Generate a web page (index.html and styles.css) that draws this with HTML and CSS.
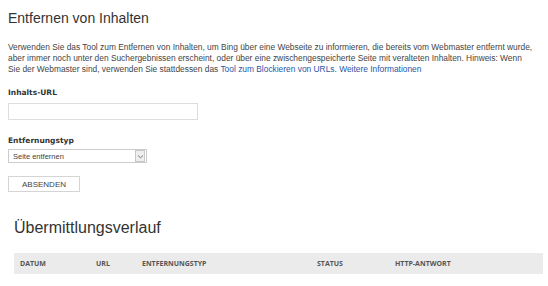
FILE: index.html
```html
<!DOCTYPE html>
<html lang="de">
<head>
    <meta charset="UTF-8">
    <title>Entfernen von Inhalten</title>
    <link rel="stylesheet" href="styles.css">
</head>
<body>
    <div class="page">
        <h1 class="page-title">Entfernen von Inhalten</h1>
        <p class="intro">Verwenden Sie das Tool zum Entfernen von Inhalten, um Bing über eine Webseite zu informieren, die bereits vom Webmaster entfernt wurde, aber immer noch unter den Suchergebnissen erscheint, oder über eine zwischengespeicherte Seite mit veralteten Inhalten. Hinweis: Wenn Sie der Webmaster sind, verwenden Sie stattdessen das <a href="#">Tool zum Blockieren von URLs</a>. <a href="#">Weitere Informationen</a></p>

        <form class="removal-form">
            <label class="field-label" for="content-url">Inhalts-URL</label>
            <input class="text-input" id="content-url" type="text">

            <label class="field-label" for="removal-type">Entfernungstyp</label>
            <div class="select-box">
                <span class="select-value">Seite entfernen</span>
                <span class="select-arrow">
                    <svg width="7" height="5" viewBox="0 0 7 5"><path d="M1 1.5 L3.5 3.8 L6 1.5" fill="none" stroke="#777" stroke-width="1"/></svg>
                </span>
            </div>

            <button class="submit-btn" type="button">ABSENDEN</button>
        </form>
    </div>

    <section class="history">
        <h2 class="history-title">Übermittlungsverlauf</h2>
        <div class="history-head">
            <span class="col col-date">DATUM</span>
            <span class="col col-url">URL</span>
            <span class="col col-type">ENTFERNUNGSTYP</span>
            <span class="col col-status">STATUS</span>
            <span class="col col-http">HTTP-ANTWORT</span>
        </div>
    </section>
</body>
</html>
```

FILE: styles.css
```css
/* --- Base --- */
* {
    margin: 0;
    padding: 0;
    box-sizing: border-box;
}

body {
    font-family: 'Liberation Sans', Arial, sans-serif;
    background-color: #ffffff;
    color: #444444;
    width: 548px;
    height: 286px;
    overflow: hidden;
}

.page {
    padding: 10px 8px 0 8px;
}

/* --- Title --- */
.page-title {
    font-size: 14px;
    font-weight: normal;
    color: #333333;
    line-height: 16px;
}

.intro {
    max-width: 525px;
    margin-top: 16px;
    font-size: 8.4px;
    line-height: 11px;
    color: #444444;
}

.intro a {
    color: #1f57a8;
    text-decoration: none;
}

/* --- Form --- */
.removal-form {
    display: flex;
    flex-direction: column;
    align-items: flex-start;
    margin-top: 13px;
}

.field-label {
    font-family: 'DejaVu Sans', Verdana, sans-serif;
    font-size: 7.5px;
    font-weight: bold;
    color: #333333;
    line-height: 10px;
    margin-bottom: 5px;
}

.text-input {
    width: 190px;
    height: 17px;
    border: 1px solid #dddddd;
    background: #ffffff;
    margin-bottom: 16px;
}

.select-box {
    width: 139px;
    height: 14px;
    margin-top: -2px;
    border: 1px solid #cccccc;
    display: flex;
    align-items: center;
    justify-content: space-between;
    margin-bottom: 13px;
}

.select-value {
    font-size: 7.5px;
    color: #444444;
    padding-left: 4px;
}

.select-arrow {
    width: 10px;
    height: 12px;
    margin-right: 1px;
    border: 1px solid #c8c8c8;
    background: #eeeeee;
    display: flex;
    align-items: center;
    justify-content: center;
}

.submit-btn {
    width: 72px;
    height: 16px;
    border: 1px solid #d4d4d4;
    background: #ffffff;
    font-family: 'Liberation Sans', Arial, sans-serif;
    font-size: 8px;
    color: #444444;
}

/* --- History --- */
.history {
    padding: 0 5px 0 14px;
    margin-top: 27px;
}

.history-title {
    font-size: 16px;
    font-weight: normal;
    color: #333333;
    line-height: 18px;
}

.history-head {
    margin-top: 16px;
    height: 21px;
    background-color: #ebebeb;
    display: flex;
    align-items: center;
    padding-left: 6px;
}

.col {
    font-family: 'Open Sans', sans-serif;
    font-size: 7px;
    font-weight: bold;
    color: #555555;
}

.col-date { width: 76px; }
.col-url { width: 46px; }
.col-type { width: 175px; }
.col-status { width: 78px; }
```
